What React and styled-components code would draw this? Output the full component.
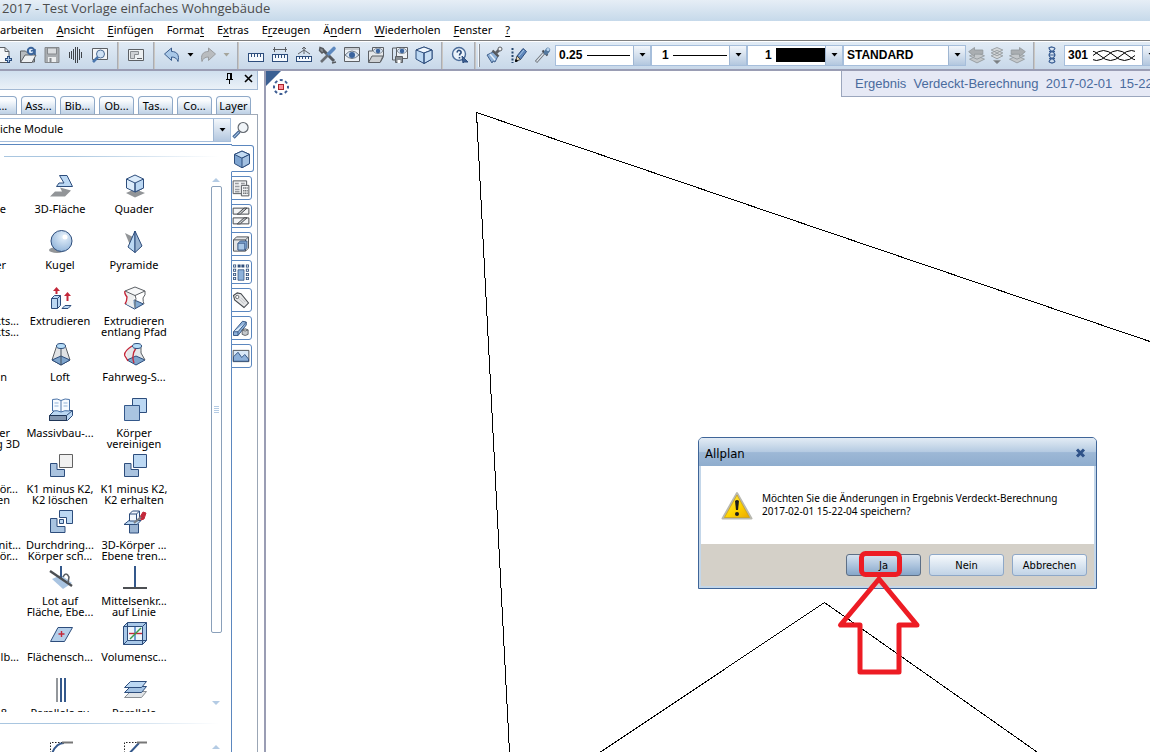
import React from "react";
import styled, { createGlobalStyle } from "styled-components";

export default function App() {
  return (
    <>
      <GlobalStyle />
      <Window>
        <TitleBar>2017 - Test Vorlage einfaches Wohngebäude</TitleBar>
        <MenuBar>
          {menus.map(([before, key, after]) => (
            <MenuItem key={before + key + after}>
              {before}
              {key && <u>{key}</u>}
              {after}
            </MenuItem>
          ))}
        </MenuBar>
        <MainToolbar />
        <Workspace>
          <Palette />
          <Viewport>
            <Drawing aria-hidden="true">
              <path
                d="M886 270.500 L212.500 41.500 L245.500 681 M336.500 681 L560.500 531.500 L773 681"
                fill="none"
                stroke="#000"
                shapeRendering="crispEdges"
              />
            </Drawing>
            <ViewCorner />
            <ViewCaption>Ergebnis&nbsp; Verdeckt-Berechnung&nbsp; 2017-02-01&nbsp; 15-22-</ViewCaption>
            <SaveDialog />
            <Marker viewBox="0 0 84 128" aria-hidden="true">
              <rect x="25.500" y="4.500" width="38" height="21" rx="4" />
              <path d="M43 30 L4.500 76 H24 V123 H63 V76 H81 Z" />
            </Marker>
          </Viewport>
        </Workspace>
      </Window>
    </>
  );
}

const menus = [
  ["arbeiten", "", ""],
  ["", "A", "nsicht"],
  ["", "E", "infügen"],
  ["Forma", "t", ""],
  ["E", "x", "tras"],
  ["E", "r", "zeugen"],
  ["Ä", "n", "dern"],
  ["", "W", "iederholen"],
  ["", "F", "enster"],
  ["", "?", ""],
];

function Icon({ name, size = 24 }) {
  return (
    <svg width={size} height={size} viewBox="0 0 24 24" fill="none" stroke="#2d4d7c" aria-hidden="true">
      {icons[name]}
    </svg>
  );
}

function Arrow({ color = "#000" }) {
  return (
    <svg width="7" height="4" viewBox="0 0 7 4" aria-hidden="true">
      <path d="M.5 0h6l-3 3.500z" fill={color} />
    </svg>
  );
}

function Combo({ label, value, wide, indent, children }) {
  return (
    <ComboBox $wide={wide}>
      <ComboField $indent={indent}>
        <ComboSelect aria-label={label} $grow={!children}>
          <option>{value}</option>
        </ComboSelect>
        {children}
      </ComboField>
      <ComboArrow>
        <Arrow />
      </ComboArrow>
    </ComboBox>
  );
}

function Tools({ names }) {
  return names.map((name) => (
    <ToolButton key={name} aria-label={name}>
      <Icon name={name} />
    </ToolButton>
  ));
}

function MainToolbar() {
  return (
    <Toolbar>
      <ToolGroup>
        <Tools names={["new", "open", "save", "bars", "preview"]} />
      </ToolGroup>
      <Separator />
      <Tools names={["plan"]} />
      <Separator />
      <Tools names={["undo"]} />
      <DropButton aria-label="undo list">
        <Arrow />
      </DropButton>
      <Tools names={["redo"]} />
      <DropButton aria-label="redo list">
        <Arrow color="#a5a59c" />
      </DropButton>
      <Separator />
      <Tools names={["ruler", "measure", "angle", "wrench", "eye", "folderEye", "diskEye", "cube"]} />
      <Separator />
      <Tools names={["help"]} />
      <Separator $tight />
      <Grip />
      <Tools names={["brush", "pencil", "pipette"]} />
      <Combo label="Stiftdicke" value="0.25">
        <svg width="43" height="19" aria-hidden="true">
          <path d="M0 9.500h43" stroke="#000" />
        </svg>
      </Combo>
      <Combo label="Strichart" value="1" indent={10}>
        <svg width="54" height="19" aria-hidden="true">
          <path d="M0 9.500h54" stroke="#000" />
        </svg>
      </Combo>
      <Combo label="Linienfarbe" value="1" indent={17}>
        <ColorSwatch />
      </Combo>
      <Combo label="Layer" value="STANDARD" wide />
      <LayerTools>
        {["layerBack", "layerDown", "layerNext"].map((name) => (
          <ToolButton key={name} aria-label={name} $narrow>
            <Icon name={name} size={20} />
          </ToolButton>
        ))}
      </LayerTools>
      <Separator />
      <Tools names={["chain"]} />
      <Combo label="Muster" value="301">
        <svg width="42" height="19" fill="none" stroke="#000" aria-hidden="true">
          <path d="M0 9.500q10.500-10 21 0t21 0M-14 9.500q10.500-10 21 0t21 0 21 0M-28 9.500q10.500-10 21 0t21 0 21 0 21 0" />
        </svg>
      </Combo>
    </Toolbar>
  );
}

const paletteTabs = ["u...", "Ass...", "Bib...", "Ob...", "Tas...", "Co...", "Layer"];
const sideTabs = ["report", "section", "room", "columns", "tag", "beam", "image"];

// first entry of a row: cut off lines as [text, distance to the column edge]
const toolRows = [
  [[["e", 18]], ["face", "3D-Fläche"], ["box", "Quader"]],
  [[["er", 18]], ["sphere", "Kugel"], ["pyramid", "Pyramide"]],
  [[["kts...", 5], ["kts...", 5]], ["extrude", "Extrudieren"], ["extrudePath", "Extrudieren", "entlang Pfad"]],
  [[["n", 17]], ["loft", "Loft"], ["sweep", "Fahrweg-S..."]],
  [[["er", 14], ["g 3D", 4]], ["book", "Massivbau-..."], ["union", "Körper", "vereinigen"]],
  [[["ör...", 6], ["en", 14]], ["minusDelete", "K1 minus K2,", "K2 löschen"], ["minusKeep", "K1 minus K2,", "K2 erhalten"]],
  [[["nit...", 3], ["ör...", 6]], ["intersect", "Durchdring...", "Körper sch..."], ["split", "3D-Körper ...", "Ebene tren..."]],
  [[], ["perp", "Lot auf", "Fläche, Ebe..."], ["bisector", "Mittelsenkr...", "auf Linie"]],
  [[["lb...", 5]], ["areaCenter", "Flächensch..."], ["volumeCenter", "Volumensc..."]],
  [[["8", 17]], ["parallels", "Parallele zu"], ["planes", "Parallele"]],
];

function Palette() {
  return (
    <PalettePane>
      <PaletteHeader>
        <HeaderButton aria-label="Anheften">
          <svg width="9" height="11" viewBox="0 0 9 11" fill="none" stroke="#000" shapeRendering="crispEdges">
            <path d="M2.500 0v6M2 .5h5M5.500 0v6M6.500 0v6M1 6.500h7M4.500 7v4" />
          </svg>
        </HeaderButton>
        <HeaderButton aria-label="Schließen">
          <svg width="9" height="9" viewBox="0 0 9 9" stroke="#000" strokeWidth="1.600">
            <path d="M1 1l7 7M8 1L1 8" />
          </svg>
        </HeaderButton>
      </PaletteHeader>
      <TabStrip>
        {paletteTabs.map((tab) => (
          <PaletteTab key={tab}>{tab}</PaletteTab>
        ))}
      </TabStrip>
      <PaletteBody>
        <SearchRow>
          <ModuleBox>
            <ModuleSelect aria-label="Module">
              <option>iche Module</option>
            </ModuleSelect>
            <ComboArrow>
              <Arrow />
            </ComboArrow>
          </ModuleBox>
          <SearchButton aria-label="Suchen">
            <Icon name="search" size={20} />
          </SearchButton>
        </SearchRow>
        <ModuleArea>
          <ToolPane>
            <Divider />
            <ToolSection>
              <ToolGrid>
                {toolRows.map(([cut, ...tools]) => (
                  <React.Fragment key={tools[0][0]}>
                    <CutLabel>
                      {cut.map(([text, end], i) => (
                        <CutLine key={i} $end={end}>
                          {text}
                        </CutLine>
                      ))}
                    </CutLabel>
                    {tools.map(([icon, ...lines]) => (
                      <Tool key={icon}>
                        <Icon name={icon} />
                        <ToolLabel>{lines.join("\n")}</ToolLabel>
                      </Tool>
                    ))}
                  </React.Fragment>
                ))}
              </ToolGrid>
              <ScrollBar>
                <ScrollArrow />
                <ScrollThumb>
                  <i />
                  <i />
                  <i />
                  <i />
                </ScrollThumb>
                <ScrollEnd>
                  <ScrollArrow $down />
                </ScrollEnd>
              </ScrollBar>
            </ToolSection>
            <Divider $low />
            <NextSection>
              <ToolGrid>
                <CutLabel />
                <Tool aria-label="Ausrunden">
                  <Icon name="fillet" />
                </Tool>
                <Tool aria-label="Fase">
                  <Icon name="chamfer" />
                </Tool>
              </ToolGrid>
              <ScrollBar>
                <ScrollArrow />
              </ScrollBar>
            </NextSection>
          </ToolPane>
          <SideTabs>
            <SideTab aria-label="cube" $active>
              <Icon name="solidCube" size={20} />
            </SideTab>
            {sideTabs.map((name) => (
              <SideTab key={name} aria-label={name}>
                <Icon name={name} size={18} />
              </SideTab>
            ))}
          </SideTabs>
        </ModuleArea>
      </PaletteBody>
    </PalettePane>
  );
}

function ViewCorner() {
  return (
    <CornerMark viewBox="0 0 26 26" aria-hidden="true">
      <path d="M0 0h15L0 15z" fill="#3a5f92" />
      <circle cx="15" cy="16" r="9" fill="#fff" />
      <circle cx="15" cy="16" r="7" fill="none" stroke="#3c5c92" strokeWidth="2" strokeDasharray="3 2.497" strokeDashoffset="1.500" />
      <rect x="12.500" y="13.500" width="5" height="5" fill="#ff8f98" stroke="#a8242c" />
    </CornerMark>
  );
}

function SaveDialog() {
  return (
    <Dialog role="dialog" aria-label="Allplan">
      <DialogTitle>
        Allplan
        <CloseButton aria-label="Schließen">
          <svg width="11" height="10" viewBox="0 0 11 10">
            <path d="M2 1.500l7 7M9 1.500l-7 7" stroke="#2f5288" strokeWidth="3" />
          </svg>
        </CloseButton>
      </DialogTitle>
      <DialogBody>
        <svg width="32" height="30" viewBox="0 0 32 30" aria-hidden="true">
          <defs>
            <linearGradient id="warn" x1="0" y1="0" x2="1" y2="1">
              <stop offset="0" stopColor="#ffed6a" />
              <stop offset=".55" stopColor="#ffd500" />
              <stop offset="1" stopColor="#e8a200" />
            </linearGradient>
          </defs>
          <path d="M16 2L30.500 27.500h-29z" fill="url(#warn)" stroke="#b9b9b0" strokeWidth="2" strokeLinejoin="round" />
          <path d="M16 4L28.500 26.500h-25z" fill="none" stroke="#caa31a" strokeWidth=".8" />
          <path d="M14 10q2-2 4 0l-1 9h-2z" fill="#1c1c1c" />
          <circle cx="16" cy="23" r="2" fill="#1c1c1c" />
        </svg>
        <Message>
          Möchten Sie die Änderungen in Ergebnis Verdeckt-Berechnung
          <br />
          2017-02-01 15-22-04 speichern?
        </Message>
      </DialogBody>
      <DialogFooter>
        <DialogButton $primary>Ja</DialogButton>
        <DialogButton>Nein</DialogButton>
        <DialogButton>Abbrechen</DialogButton>
      </DialogFooter>
    </Dialog>
  );
}

const pale = "#dcecfb";
const sky = "#bcd8f3";
const steel = "#9ab4d2";
const grey = "#5c6065";
const red = "#c3283a";

const eyeShape = (
  <>
    <path d="M5 12q7-8 14 0-7 7-14 0z" fill="#dbe6f2" stroke="#6f7a86" />
    <circle cx="12" cy="12" r="3" fill="#3c659e" stroke="none" />
  </>
);

const icons = {
  new: (
    <>
      <path d="M5 4.500h8l4 4v11H5z" fill="#f4f6f8" stroke={grey} />
      <path d="M13 4.500v4h4" stroke={grey} />
      <path d="M16.500 13v7M13 16.500h7" strokeWidth="3" />
      <path d="M16.500 14v5M14 16.500h5" stroke="#a9c8ea" />
    </>
  ),
  open: (
    <>
      <path d="M4.500 19V8h5l2 2h7v9z" fill="#b8bcc0" stroke={grey} />
      <path d="M4.500 19.500L9 12h11l-4 7.500z" fill="#eef0f2" stroke={grey} />
      <circle cx="15" cy="8" r="3.200" stroke="#3b659c" strokeWidth="2" fill="#dceafa" />
      <path d="M15 8l4-1v5" stroke="#3b659c" strokeWidth="1.600" />
    </>
  ),
  save: (
    <>
      <path d="M5 4.500h14v15H5z" fill="#a9adb1" stroke="#85898d" />
      <path d="M7.500 5h9v6h-9z" fill="#d9dcdf" stroke="#85898d" />
      <path d="M8 14h8v5H8z" fill="#eceeef" stroke="none" />
      <path d="M10.500 15v4" stroke="#85898d" strokeWidth="2" />
    </>
  ),
  bars: <path d="M5.500 9v6M7.500 8v8M9.500 6v11M11.500 4v16M13.500 4v16M15.500 6v11M17.500 9v6" stroke="#3f444a" shapeRendering="crispEdges" />,
  preview: (
    <>
      <path d="M4.500 5.500h15v11h-15z" fill="#f3f5f7" stroke={grey} />
      <circle cx="12.500" cy="11" r="4" fill="#cfe2f5" stroke="#4d6c94" />
      <path d="M10 14l-5 5" stroke="#4a76ad" strokeWidth="2.600" />
    </>
  ),
  plan: (
    <>
      <path d="M4.500 6.500h15v11h-15z" fill="#edf0f2" stroke={grey} />
      <path d="M6.500 8.500h8v3h-4v4h-4z" fill="#cfd2d5" stroke="#8a8e92" />
      <path d="M13 15.500h5" stroke={grey} />
    </>
  ),
  undo: <path d="M4.500 11l7-6v3.500c6 0 8 4 6.500 10-1-3-3-4.500-6.500-4.500v3.500z" fill="#a9c8e8" stroke="#3a5c8c" strokeLinejoin="round" />,
  redo: <path d="M19.500 11l-7-6v3.500c-6 0-8 4-6.500 10 1-3 3-4.500 6.500-4.500v3.500z" fill="#b9bcbf" stroke="#9a9da0" strokeLinejoin="round" />,
  ruler: (
    <g shapeRendering="crispEdges">
      <path d="M4.500 10.500h15v8h-15z" fill="#f5f9fd" />
      <path d="M7.500 11v3M10.500 11v3M13.500 11v3M16.500 11v3" />
    </g>
  ),
  measure: (
    <g shapeRendering="crispEdges">
      <path d="M4.500 11.500h15v7h-15z" fill="#f5f9fd" />
      <path d="M7.500 12v3M10.500 12v3M13.500 12v3M16.500 12v3" />
      <path d="M5 6.500h14M6.500 4v5M17.500 4v5" stroke={grey} />
    </g>
  ),
  angle: (
    <>
      <path d="M4.500 13.500h15v5h-15z" fill="#f5f9fd" shapeRendering="crispEdges" />
      <path d="M7.500 14v2M10.500 14v2M13.500 14v2M16.500 14v2" shapeRendering="crispEdges" />
      <path d="M6 11l6-4 6 4M12 11V4M10 6l2-2 2 2" stroke={grey} />
    </>
  ),
  wrench: (
    <>
      <path d="M6 6l12 12" stroke="#55595e" strokeWidth="3" />
      <path d="M4 4.500l3 1 1 3-2 1.500-2.500-2.500zM16 20l4-1" stroke="#55595e" strokeWidth="1.400" fill="#8a8f94" />
      <path d="M18 5.500l-6 6" stroke="#5d89bf" strokeWidth="3.600" strokeLinecap="round" />
      <path d="M12 12l-7 7" stroke="#6a6f75" strokeWidth="2.600" />
    </>
  ),
  eye: (
    <>
      <path d="M4.500 4.500h15v14h-15z" fill="#edf1f5" stroke={grey} />
      <path d="M5 6h14" stroke="#9da3a9" />
      {eyeShape}
    </>
  ),
  folderEye: (
    <>
      <path d="M4.500 19V8h4V4.500h11v9l-3 5.500z" fill="#e4e7ea" stroke={grey} />
      <g transform="translate(5 -1) scale(.75)">{eyeShape}</g>
      <path d="M4.500 19.500L8 13h11l-3 6.500z" fill="#cdd0d3" stroke={grey} />
    </>
  ),
  diskEye: (
    <>
      <path d="M4.500 5v12H14M4.500 5H8" stroke={grey} />
      <path d="M8.500 4.500h11v11h-11z" fill="#edf1f5" stroke={grey} />
      <g transform="translate(5 -1) scale(.75)">{eyeShape}</g>
      <path d="M7.500 13.500h7v6h-7z" fill="#8a8f94" stroke={grey} />
      <path d="M9.500 17h3v3h-3z" fill="#fff" stroke="none" />
    </>
  ),
  cube: (
    <>
      <path d="M12 4l8 3v9l-8 4.500L4 16V7z" fill={sky} />
      <path d="M4 7l8 3 8-3-8-3z" fill="#f0f7fe" />
      <path d="M12 10l8-3v9l-8 4.500z" fill="#c9dff4" />
      <path d="M12 10v10.500" />
    </>
  ),
  help: (
    <>
      <circle cx="11" cy="11" r="6.500" fill="#eaf2fa" stroke="#4a6b99" strokeWidth="1.400" />
      <path d="M9 9.500q.5-2.500 2.500-2t1.500 2.500q-1.500 1-1.500 2.500M11.500 14v1.500" stroke="#2d4d7c" strokeWidth="1.600" />
      <path d="M14 13l6 6h-4l-1 1z" fill="#3d5f92" />
    </>
  ),
  brush: (
    <>
      <path d="M4 12l6-3 5 4-3 6-2-1-1 2z" fill="#8fb2d8" stroke="#41618d" />
      <path d="M7 11l5 6" stroke="#e5eff9" strokeWidth="1.400" />
      <path d="M9.500 7.500l6 6" stroke="#55595e" strokeWidth="2.400" />
      <path d="M13 10l3-3" stroke={grey} strokeWidth="3" />
      <circle cx="17" cy="6" r="2" fill="#f2f3f4" stroke={grey} />
    </>
  ),
  pencil: (
    <>
      <path d="M5.500 5v15" stroke="#27486f" strokeDasharray="2 1.500" strokeWidth="2" />
      <path d="M10 13l6-7.500 3.500 3-6 8z" fill="#5e88bd" />
      <path d="M12 13l5-6" stroke="#a9c8e8" />
      <path d="M8.500 18.500l1.500-5.500 3.500 3.500z" fill="#e5d7b4" stroke="#414449" />
      <path d="M8.500 18.500l.5-2 1.500 1.500z" fill="#000" stroke="#000" />
    </>
  ),
  pipette: (
    <>
      <path d="M5 19l8-9" stroke="#6b7076" strokeWidth="3" />
      <path d="M5.500 18.500l7-8" stroke="#dfe8f2" strokeWidth="1.200" />
      <path d="M11.500 7.500l5 5" stroke="#454a52" strokeWidth="2" />
      <path d="M15 9.500l2-2.500" stroke="#54799f" strokeWidth="4.500" strokeLinecap="round" />
      <circle cx="17" cy="6.500" r="1.500" fill={sky} stroke="none" />
    </>
  ),
  layerBack: (
    <g fill="#c4c8cb" stroke="#92979b">
      <path d="M3 17l9 4.500 9-4.500-9-4z" />
      <path d="M3 13l9 4 9-4-9-4z" />
      <path d="M2 8l7-5v3h10v5H9v3z" fill="#aaaeb1" />
    </g>
  ),
  layerDown: (
    <g fill="#d5d8da" stroke="#92979b">
      <path d="M5 13l7 3.500 7-3.500-7-3zM5 9.500l7 3.500 7-3.500-7-3zM5 6l7 3.500L19 6l-7-3z" />
      <path d="M8 18.500h8l-4 4z" fill="#777c80" />
    </g>
  ),
  layerNext: (
    <g fill="#c4c8cb" stroke="#92979b">
      <path d="M3 17l9 4.500 9-4.500-9-4z" />
      <path d="M3 13l9 4 9-4-9-4z" />
      <path d="M22 8l-7-5v3H5v5h10v3z" fill="#aaaeb1" />
    </g>
  ),
  chain: <path d="M9 5q0 2 3 3.500T15 12t-3 3.500T9 19M15 5q0 2-3 3.500T9 12t3 3.500 3 3.500M8.500 5l3-1 3.500 1M9 12h6M9 19l3 1 3-1M9 8.500h6M9 15.500h6" stroke="#3b5f94" strokeWidth="1.200" />,
  search: (
    <>
      <path d="M10 14l-7 7" stroke="#3e6191" strokeWidth="4" />
      <path d="M9.500 14.500l-6 6" stroke="#a8c6e6" strokeWidth="1.400" />
      <circle cx="14.500" cy="9" r="6" fill="#f0f4f8" stroke="#62686f" strokeWidth="1.400" />
    </>
  ),
  solidCube: (
    <g strokeWidth="1.200">
      <path d="M12 2.500l9 4v11l-9 5-9-5v-11z" fill="#7fa5d1" />
      <path d="M3 6.500l9 4.500 9-4.500-9-4z" fill="#c3dbf3" />
      <path d="M12 11l9-4.500v11l-9 5z" fill="#a4c1e1" />
    </g>
  ),
  report: (
    <g stroke="#55595e" strokeWidth="1.300">
      <path d="M1.500 2.500h18v17h-18z" fill="#f1f2f3" />
      <path d="M4 6h5M12 6h5M4 10h6M4 14h6M4 17h6" stroke="#9a9da1" strokeWidth="2" />
      <path d="M12.500 8.500h10v14h-10z" fill="#f1f2f3" />
      <path d="M15 12h6M15 15.500h6M15 19h6" strokeDasharray="1.600 1" strokeWidth="2" />
    </g>
  ),
  section: (
    <g stroke="#44484d" strokeWidth="1.300" fill="#f4f5f6">
      <path d="M1.500 1.500h21v8h-21zM1.500 14.500h21v8h-21z" />
      <path d="M7 9.500L16 1.500h4l-9 8zM7 22.500l9-8h4l-9 8z" fill="#c4c7ca" />
    </g>
  ),
  room: (
    <>
      <path d="M2 6.500l4-4h16v15l-4 4H2zM2 6.500h16v15M18 6.500l4-4" fill="#e3e5e7" stroke="#44484d" strokeWidth="1.200" />
      <path d="M8 11l3-3h9v9l-3 3H8z" fill="#7fa5d1" />
      <path d="M8 11h9v9H8z" fill="#a9c8e8" />
    </>
  ),
  columns: (
    <>
      <path d="M3.500 2v21M20.500 2v21M9.500 2v4M14.500 2v4" stroke="#33507c" strokeWidth="4" strokeDasharray="4 1.600" />
      <path d="M3.500 3v20M20.500 3v20" stroke="#e8f1fa" strokeWidth="1.600" strokeDasharray="2 3.600" />
      <path d="M8 9h8v14H8z" fill="#8db1da" />
    </>
  ),
  tag: (
    <>
      <path d="M2 6l5-3.500 5 1L22 16l-6 6L3.500 12z" fill="#e6e7e8" stroke="#44484d" strokeWidth="1.400" />
      <circle cx="7" cy="8" r="2.200" fill="#fff" stroke="#44484d" />
      <path d="M10 11l6 6M12 9l6 6" stroke="#b1b4b7" />
    </>
  ),
  beam: (
    <>
      <path d="M2 17L14 3l5 1v4L8 22H2z" fill="#8db1da" strokeWidth="1.200" />
      <path d="M2 17h6L19 4" fill="#dcecfb" strokeWidth="1.200" />
      <path d="M8 17v5" strokeWidth="1.200" />
      <path d="M13.500 14.500q4-3 8 0v6q-4 3-8 0zq4 3 8 0" fill="#c6c9cc" stroke="#44484d" />
    </>
  ),
  image: (
    <>
      <path d="M1.500 4.500h21v15h-21z" fill="#d9e9f8" stroke="#44484d" strokeWidth="1.200" />
      <path d="M2 13l6-6 5 7 4-4 5 6v3H2z" fill="#8db1da" strokeWidth="1.200" />
    </>
  ),
  face: (
    <>
      <path d="M1 22.500l5-5h7l-2-4 11 3-6 6z" fill="#929598" stroke="none" />
      <path d="M10.500 1.500H18l5.500 11H7.500L10 9h5z" fill={sky} />
    </>
  ),
  box: (
    <>
      <path d="M3 19l9-4 10 4-10 4.500z" fill="#929598" stroke="none" />
      <path d="M3.500 5L12 1l8.500 4v9L12 18l-8.500-4z" fill={pale} />
      <path d="M12 9l8.500-4v9L12 18z" fill={sky} />
      <path d="M3.500 5L12 9v9" />
    </>
  ),
  sphere: (
    <>
      <defs>
        <radialGradient id="ball" cx=".6" cy=".3" r=".75">
          <stop offset="0" stopColor="#e8f3fd" />
          <stop offset="1" stopColor="#8fb2d8" />
        </radialGradient>
      </defs>
      <ellipse cx="8" cy="20" rx="8" ry="3" fill="#929598" stroke="none" />
      <circle cx="12.500" cy="11" r="10.500" fill="url(#ball)" />
      <circle cx="16" cy="7" r="2.500" fill="#fff" stroke="none" />
    </>
  ),
  pyramid: (
    <>
      <path d="M2 3l10 5-3 12z" fill="#929598" stroke="none" />
      <path d="M12 1L5 17l7 5.500z" fill={sky} />
      <path d="M12 1l7 15-7 6.500z" fill={steel} />
    </>
  ),
  extrude: (
    <>
      <path d="M2.500 12.500l3-3h6v10l-3 3h-6z" fill={sky} />
      <path d="M2.500 12.500h6v10M8.500 12.500l3-3" />
      <path d="M7.500 8V3M18.500 15V8" stroke={red} strokeWidth="2" />
      <path d="M4 5l3.500-4L11 5zM15 10l3.500-4L22 10z" fill={red} stroke="none" />
      <path d="M13 22.500l3-3h6l-3 3z" fill={sky} />
    </>
  ),
  extrudePath: (
    <>
      <path d="M2.500 18l9-4 9 4-9 5z" fill="#83abd3" />
      <path d="M2 5q2 4 3 7 0 4-2 6l9 4.500q-3-7 0-13.500z" fill="#eceeef" stroke="none" />
      <path d="M2 5l10-4 10 4-10 4.500z" fill="#f7f8f9" stroke={grey} />
      <path d="M22 5q1 4-2 7 0 4 1 6M12 9q2 4 0 7v6" stroke={grey} />
      <path d="M2 5q-1 2 2 6 0 4-2 7" stroke={red} strokeWidth="1.400" />
    </>
  ),
  loft: (
    <>
      <path d="M8 3L3 18l9 5 9-5-5-15z" fill="#e1e3e5" stroke={grey} />
      <path d="M3 18l9-4 9 4-9 5z" fill="#7fa5cc" />
      <path d="M12 6v17" stroke="#44505f" />
      <ellipse cx="12" cy="4" rx="4.500" ry="2.500" fill="#b5dcf8" />
    </>
  ),
  sweep: (
    <>
      <path d="M9 4q-8 6-5 12l9 6 9-5q-5-6-4-13z" fill="#e4e7ea" stroke="none" />
      <path d="M4 18l9-4 9 4-9 5z" fill="#7fa5cc" />
      <path d="M18 4q0 5 0 7l4 7" stroke={grey} />
      <path d="M9 4q-9 6-7 10l3 5M13 6q-5 7-2 15" stroke={red} strokeWidth="1.400" />
      <ellipse cx="14" cy="4" rx="4.500" ry="2.500" fill="#b5dcf8" />
    </>
  ),
  book: (
    <>
      <path d="M.5 17.500l5-5h18v5l-5 5H.500z" fill={sky} />
      <path d="M.5 17.500h17v5H.500z" fill="#8296b0" stroke="#1f3556" />
      <path d="M17.500 17.500l6-5" />
      <path d="M3.500 13V1.500q5-1.500 8.500 1 4-2.500 8.500-1V13q-5-1-8.500 1-3.500-2-8.500-1zM12 2.500V14" fill="#f6faff" stroke="#4a73a8" />
      <path d="M5.500 5h4M5.500 8h4M14.500 5h4M14.500 8h4" stroke="#93b3d7" />
    </>
  ),
  union: (
    <>
      <path d="M9.500.5h14v14h-14z" fill={sky} />
      <path d="M1.500 7.500h15v15h-15z" fill="#a9c4e1" stroke="#34588b" />
    </>
  ),
  minusDelete: (
    <>
      <path d="M1.500 9.500H8v6h7.500v7h-14z" fill="#aac3df" />
      <path d="M10.500.5h13v13h-13z" fill="#f1f1f1" stroke="#626262" />
    </>
  ),
  minusKeep: (
    <>
      <path d="M1.500 9.500H8v6h7.500v7h-14z" fill="#aac3df" />
      <path d="M10.500.5h13v13h-13z" fill={sky} />
    </>
  ),
  intersect: (
    <>
      <path d="M10.500.5h13v13h-6v-6h-7z" fill={sky} />
      <path d="M1.500 8.500H8v8h8v6H1.500z" fill="#a9c4e1" />
      <path d="M10.500 9.500h4v4h-4z" fill={sky} />
    </>
  ),
  split: (
    <>
      <path d="M6.500 14h9v9h-9z" fill={steel} />
      <path d="M1 14.500l5-4h12l-4 4z" fill={sky} />
      <path d="M6.500 11V4l3-3h7v8l-2 2z" fill="#f3f8fd" />
      <path d="M6.500 4h7v7M13.500 4l3-3" />
      <path d="M17 7l3-5 3 1-2 6-3 1z" fill={red} stroke={red} />
      <path d="M11 13l7-6" stroke="#7c8085" strokeWidth="2" />
    </>
  ),
  perp: (
    <>
      <path d="M3 13l9-4 11 8-9 6z" fill="#a9c4e1" stroke="none" />
      <path d="M12 0v13" stroke="#34588b" strokeWidth="2" />
      <path d="M1 5l22 15" stroke="#4c4f53" strokeWidth="2.400" />
      <path d="M14 11q3-6 6 0l-1 6" stroke={grey} strokeWidth="1.600" />
    </>
  ),
  bisector: (
    <>
      <path d="M12 0v22" stroke="#34588b" strokeWidth="2" />
      <path d="M0 22h24" stroke="#4c4f53" strokeWidth="2" />
    </>
  ),
  areaCenter: (
    <>
      <path d="M1.500 19.500L9 5.500h14.500l-8 14z" fill="#b5cfea" />
      <path d="M12.500 9v6M9.500 12h6" stroke={red} strokeWidth="1.400" />
    </>
  ),
  volumeCenter: (
    <>
      <path d="M.5 4.500l4-4h19v18l-4 4H.500z" fill="#a9c8e8" />
      <path d="M4.500 4.500h15v14h-15z" fill="#edf5fc" stroke="none" />
      <path d="M4.500.5v18h19M.500 22.500l4-4M.500 4.500h19v18M19.500 4.500l4-4" />
      <path d="M12 5v13" stroke="#3b77c4" strokeWidth="1.400" />
      <path d="M6 11.500h13" stroke={red} strokeWidth="1.400" />
      <path d="M7 17L18 6" stroke="#3b9a4a" strokeWidth="1.400" />
    </>
  ),
  parallels: (
    <>
      <path d="M8 0v24" stroke="#93979b" strokeWidth="2" />
      <path d="M12 0v24M16 0v24" stroke="#34588b" strokeWidth="2" />
    </>
  ),
  planes: (
    <>
      <path d="M1.500 19.500l6-6h16l-5 6z" fill="#e0e4e8" stroke="#888d92" />
      <path d="M1.500 14.500l6-6h16l-5 6z" fill="#a4c3e4" />
      <path d="M1.500 9.500l6-6h16l-5 6z" fill={sky} />
    </>
  ),
  fillet: (
    <>
      <path d="M1.500 24V1.500H14" stroke="#222" strokeDasharray="1.500 1.500" />
      <path d="M1 19q4-17 14-17" stroke="#34588b" strokeWidth="2" />
      <path d="M13 1.500h11" stroke="#777" strokeWidth="2" />
    </>
  ),
  chamfer: (
    <>
      <path d="M1.500 24V1.500H14" stroke="#222" strokeDasharray="1.500 1.500" />
      <path d="M2 17L16 2" stroke="#34588b" strokeWidth="2" />
      <path d="M14 1.500h10" stroke="#777" strokeWidth="2" />
    </>
  ),
};

const GlobalStyle = createGlobalStyle`
  * {
    box-sizing: border-box;
  }
  body {
    margin: 0;
    font-family: "Noto Sans", sans-serif;
    font-size: 11px;
    color: #000;
  }
  button,
  select {
    margin: 0;
    padding: 0;
    border: none;
    background: none;
    font: inherit;
    color: inherit;
  }
  svg {
    display: block;
    flex: none;
  }
`;

const Window = styled.div`
  display: flex;
  flex-direction: column;
  height: 100vh;
  overflow: hidden;
  background: #fff;
`;

const TitleBar = styled.header`
  flex: none;
  height: 21px;
  padding-left: 2px;
  font-family: "Open Sans", sans-serif;
  font-size: 13px;
  line-height: 17px;
  color: #4c4c4c;
  background: linear-gradient(#e6eef6, #c6d9ea);
`;

const MenuBar = styled.nav`
  flex: none;
  display: flex;
  gap: 13px;
  height: 20px;
  border-bottom: 1px solid #808080;
`;

const MenuItem = styled.button`
  height: 18px;
  line-height: 18px;
  white-space: nowrap;
  u {
    text-underline-offset: 2px;
  }
`;

const Toolbar = styled.div`
  flex: none;
  display: flex;
  align-items: center;
  height: 30px;
  padding-bottom: 1px;
  overflow: hidden;
  border-top: 1px solid #fff;
  border-bottom: 2px solid #9a9db4;
  background: linear-gradient(#e1ebf5, #c8d8e9);
`;

const ToolGroup = styled.div`
  display: flex;
  flex: none;
  margin-left: -8px;
`;

const ToolButton = styled.button`
  display: flex;
  flex: none;
  align-items: center;
  justify-content: center;
  width: ${(props) => (props.$narrow ? "20px" : "24px")};
  height: 24px;
`;

const DropButton = styled.button`
  display: flex;
  flex: none;
  align-items: center;
  justify-content: center;
  width: 12px;
  height: 24px;
`;

const Separator = styled.div`
  flex: none;
  width: 2px;
  height: 27px;
  margin: ${(props) => (props.$tight ? "0 2px" : "0 5px")};
  border-left: 1px solid #a9adb5;
  background: #c9c6c2;
`;

const Grip = styled.div`
  flex: none;
  width: 2px;
  height: 23px;
  margin-right: 3px;
  border-right: 1px solid #8c9097;
  background: #f4f7fa;
`;

const ComboBox = styled.div`
  display: flex;
  flex: none;
  width: ${(props) => (props.$wide ? "123px" : "96px")};
  height: 21px;
  border: 1px solid #a6bedb;
  background: #fff;
`;

const ComboField = styled.div`
  display: flex;
  flex: 1;
  align-items: center;
  gap: 4px;
  padding-left: ${(props) => props.$indent || 3}px;
  overflow: hidden;
`;

const ComboSelect = styled.select`
  flex: ${(props) => (props.$grow ? 1 : "none")};
  appearance: none;
  font-family: "Liberation Sans", Arial, sans-serif;
  font-size: 12px;
  font-weight: bold;
`;

const ComboArrow = styled.span`
  display: flex;
  flex: none;
  align-items: center;
  justify-content: center;
  width: 17px;
  border-left: 1px solid #9fb6d2;
  background: linear-gradient(#f3f7fb, #b3c7df);
  pointer-events: none;
`;

const ColorSwatch = styled.span`
  width: 49px;
  height: 14px;
  background: #000;
`;

const LayerTools = styled.div`
  display: flex;
  flex: none;
  padding: 0 1px;
`;

const Workspace = styled.main`
  display: flex;
  flex: 1;
  min-height: 0;
`;

const PalettePane = styled.aside`
  display: flex;
  flex: none;
  flex-direction: column;
  width: 264px;
  padding-right: 6px;
  overflow: hidden;
`;

const PaletteHeader = styled.div`
  display: flex;
  flex: none;
  align-items: center;
  justify-content: flex-end;
  gap: 10px;
  height: 19px;
  padding: 0 4px 3px 0;
  border: 1px solid #a3b9d4;
  border-width: 0 1px 1px 0;
  background: linear-gradient(#cfdfee, #eaf1f8);
`;

const HeaderButton = styled.button`
  display: flex;
`;

const TabStrip = styled.div`
  display: flex;
  flex: none;
  align-items: flex-end;
  gap: 4px;
  height: 25px;
  margin-left: -18px;
  border-bottom: 1px solid #a0aab8;
`;

const PaletteTab = styled.button`
  flex: none;
  width: 35px;
  height: 18px;
  line-height: 16px;
  white-space: nowrap;
  border: 1px solid #8fa9c8;
  border-bottom: none;
  border-radius: 4px 4px 0 0;
  background: linear-gradient(#fafcfe 20%, #bdd0e5);
`;

const PaletteBody = styled.div`
  display: flex;
  flex: 1;
  flex-direction: column;
  min-height: 0;
  padding-top: 3px;
  border-right: 1px solid #9ba6b5;
`;

const SearchRow = styled.div`
  display: flex;
  flex: none;
  align-items: center;
  height: 26px;
  padding-bottom: 2px;
`;

const ModuleBox = styled.div`
  display: flex;
  width: 231px;
  height: 24px;
  border: 1px solid #a6bedb;
  border-left: none;
`;

const ModuleSelect = styled.select`
  flex: 1;
  padding-bottom: 3px;
  appearance: none;
`;

const SearchButton = styled.button`
  display: flex;
`;

const ModuleArea = styled.div`
  display: flex;
  flex: 1;
  min-height: 0;
`;

const ToolPane = styled.div`
  display: flex;
  flex: none;
  flex-direction: column;
  width: 232px;
  border-top: 1px solid #5b87bf;
  border-right: 1px solid #5b87bf;
`;

const Divider = styled.div`
  flex: none;
  height: 1px;
  margin: ${(props) => (props.$low ? "11px 12px 17px 0" : "11px 12px 17px 4px")};
  background: linear-gradient(90deg, #a9c6e0 30%, #fff);
`;

const ToolSection = styled.div`
  display: flex;
  flex: none;
  height: 538px;
  overflow: hidden;
`;

const NextSection = styled.div`
  display: flex;
  flex: 1;
  min-height: 0;
  overflow: hidden;
`;

const ToolGrid = styled.div`
  display: grid;
  flex: none;
  grid-template-columns: 24px 74px 74px;
  grid-auto-rows: 56px;
  width: 210px;
`;

const CutLabel = styled.div`
  padding-top: 29px;
  overflow: hidden;
`;

const CutLine = styled.div`
  display: flex;
  justify-content: flex-end;
  height: 11px;
  padding-right: ${(props) => props.$end}px;
  line-height: 11px;
  white-space: nowrap;
`;

const Tool = styled.button`
  display: flex;
  flex-direction: column;
  align-items: center;
  gap: 5px;
`;

const ToolLabel = styled.span`
  padding-right: 2px;
  line-height: 11px;
  white-space: pre;
`;

const ScrollBar = styled.div`
  display: flex;
  flex-direction: column;
  align-items: center;
  width: 12px;
  padding-top: 4px;
`;

const ScrollArrow = styled.i`
  flex: none;
  border: 4px solid transparent;
  border-top-width: ${(props) => (props.$down ? "4px" : "0")};
  border-bottom-width: ${(props) => (props.$down ? "0" : "4px")};
  border-top-color: #b4cbe4;
  border-bottom-color: #b4cbe4;
`;

const ScrollThumb = styled.div`
  display: flex;
  flex: none;
  flex-direction: column;
  align-items: center;
  justify-content: center;
  gap: 1px;
  width: 11px;
  height: 447px;
  margin-top: 4px;
  border: 1px solid #8aa0ba;
  border-radius: 2px;
  i {
    width: 5px;
    height: 1px;
    background: #b4cbe4;
  }
`;

const ScrollEnd = styled.div`
  display: flex;
  padding-top: 68px;
`;

const SideTabs = styled.div`
  display: flex;
  flex-direction: column;
  gap: 4px;
  margin-left: -1px;
  padding-top: 1px;
`;

const SideTab = styled.button`
  display: flex;
  flex: none;
  align-items: center;
  width: ${(props) => (props.$active ? "23px" : "21px")};
  height: ${(props) => (props.$active ? "27px" : "24px")};
  border: 1px solid #5b87bf;
  border-left-color: ${(props) => (props.$active ? "#fff" : "#5b87bf")};
  border-radius: 0 3px 3px 0;
  background: #fff;
`;

const Viewport = styled.section`
  position: relative;
  flex: 1;
  min-width: 0;
  overflow: hidden;
  border-left: 2px solid #9a9db4;
`;

const Drawing = styled.svg`
  position: absolute;
  top: 0;
  left: -2px;
  width: 100%;
  height: 100%;
  overflow: visible;
`;

const CornerMark = styled.svg`
  position: absolute;
  top: 0;
  left: 0;
  width: 26px;
  height: 26px;
`;

const ViewCaption = styled.div`
  position: absolute;
  top: 0;
  right: 0;
  width: 309px;
  height: 26px;
  padding-left: 13px;
  overflow: hidden;
  font-family: "Liberation Sans", Arial, sans-serif;
  font-size: 13px;
  line-height: 26px;
  white-space: nowrap;
  color: #4a6b9d;
  border: 1px solid #9ba6bd;
  border-width: 0 0 1px 1px;
  background: #e6e9f5;
`;

const Dialog = styled.div`
  position: absolute;
  top: 366px;
  left: 432px;
  width: 399px;
  font-family: "DejaVu Sans Condensed", Tahoma, sans-serif;
  border: 1px solid #3f6598;
  border-radius: 5px 5px 0 0;
  background: #c3d6e9;
  overflow: hidden;
`;

const DialogTitle = styled.div`
  display: flex;
  align-items: center;
  justify-content: space-between;
  height: 28px;
  padding: 2px 10px 0 6px;
  font-size: 13px;
  background: linear-gradient(#e3ecf5, #b4cae1 50%, #9db8d6 52%, #8fadce);
`;

const CloseButton = styled.button`
  display: flex;
`;

const DialogBody = styled.div`
  display: flex;
  gap: 9px;
  height: 78px;
  margin: 0 2px;
  padding: 25px 0 0 20px;
  background: #fff;
`;

const Message = styled.p`
  margin: 1px 0 0;
  font-family: "Noto Sans", sans-serif;
  font-size: 10px;
  line-height: 13px;
  white-space: nowrap;
`;

const DialogFooter = styled.div`
  display: flex;
  justify-content: flex-end;
  gap: 8px;
  margin: 0 2px 2px;
  padding: 10px 7px;
  background: #d4d0c8;
`;

const DialogButton = styled.button`
  width: 75px;
  height: 22px;
  font-size: 11px;
  border: 1px solid ${(props) => (props.$primary ? "#5d6f86" : "#8ea8c8")};
  border-radius: 3px;
  background: ${(props) =>
    props.$primary
      ? "linear-gradient(#d6e2ef, #aec5de 50%, #86a6c9)"
      : "linear-gradient(#f6f9fc, #dbe6f1 50%, #c1d3e6)"};
`;

const Marker = styled.svg`
  position: absolute;
  top: 478px;
  left: 570px;
  width: 84px;
  height: 128px;
  fill: none;
  stroke: #ed1c24;
  stroke-width: 5;
  stroke-linejoin: round;
  pointer-events: none;
`;
